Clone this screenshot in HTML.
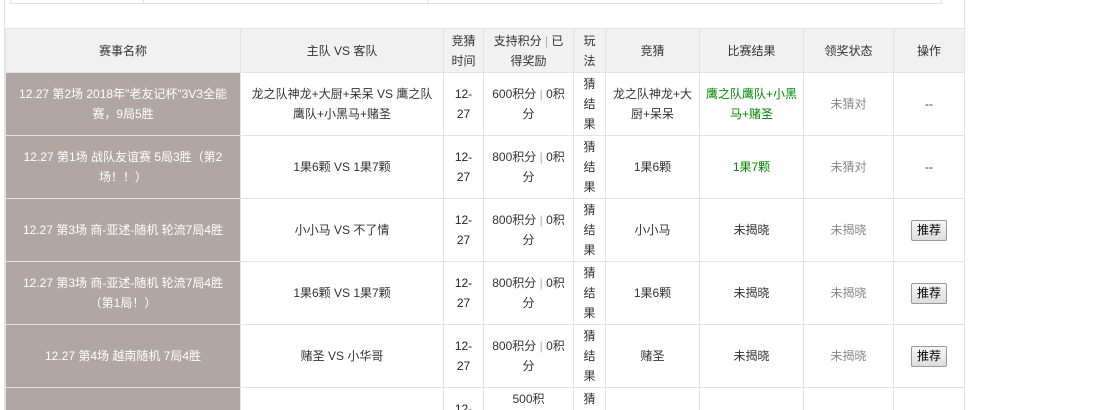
<!DOCTYPE html>
<html><head><meta charset="utf-8"><style>
html,body{margin:0;width:1108px;height:410px;overflow:hidden;background:#fff;font-family:"Liberation Sans","Noto Sans CJK SC",sans-serif;font-size:12px;color:#333;position:relative}
.outer{position:absolute;left:4px;top:-1px;width:959px;height:411px;border-left:1px solid #e3e3e3;border-right:1px solid #e3e3e3}
.top{position:absolute;left:10px;top:-2px;width:930px;height:5px;border:1px solid #e3e3e3;border-top:none}
.top i{position:absolute;top:0;height:5px;border-left:1px solid #e3e3e3}
table{position:absolute;left:5px;top:28px;border-collapse:collapse;table-layout:fixed;width:959px}
td,th{border:1px solid #e3e3e3;text-align:center;vertical-align:middle;line-height:20px;padding:0 8px;font-weight:normal;white-space:nowrap}
th{background:#f1f1f1;height:43px;color:#333}
tr.r td{height:62px}
td.n{background:#b0a7a5;color:#fff;padding:0 10px}
.g{color:#080}.gr{color:#888}.sep{color:#aaa}
.d{color:#223}
.s{padding:0 2px}
button{font-family:inherit;font-size:12px;padding:1px 5px;border:1px solid #999;background:linear-gradient(#f6f6f6,#ddd);border-radius:2px;line-height:17px}
</style></head><body>
<div class="outer"></div>
<div class="top"><i style="left:132px"></i><i style="left:417px"></i></div>
<table>
<colgroup><col style="width:235px"><col style="width:203px"><col style="width:40px"><col style="width:90px"><col style="width:32px"><col style="width:94px"><col style="width:104px"><col style="width:90px"><col style="width:71px"></colgroup>
<tr><th>赛事名称</th><th>主队 VS 客队</th><th class="s">竞猜<br>时间</th><th class="s">支持积分 <span class="sep">|</span> 已<br>得奖励</th><th class="s">玩<br>法</th><th>竞猜</th><th>比赛结果</th><th>领奖状态</th><th>操作</th></tr>
<tr class="r"><td class="n">12.27 第2场 2018年"老友记杯"3V3全能<br>赛，9局5胜</td><td class="s">龙之队神龙+大厨+呆呆 VS 鹰之队<br>鹰队+小黑马+赌圣</td><td class="d s">12-<br>27</td><td class="s">600积分 <span class="sep">|</span> 0积<br>分</td><td class="s">猜<br>结<br>果</td><td class="s">龙之队神龙+大<br>厨+呆呆</td><td class="g s">鹰之队鹰队+小黑<br>马+赌圣</td><td class="gr">未猜对</td><td>--</td></tr>
<tr class="r"><td class="n">12.27 第1场 战队友谊赛 5局3胜（第2<br>场！！）</td><td>1果6颗 VS 1果7颗</td><td class="d s">12-<br>27</td><td class="s">800积分 <span class="sep">|</span> 0积<br>分</td><td class="s">猜<br>结<br>果</td><td>1果6颗</td><td class="g">1果7颗</td><td class="gr">未猜对</td><td>--</td></tr>
<tr class="r"><td class="n">12.27 第3场 商-亚述-随机 轮流7局4胜</td><td>小小马 VS 不了情</td><td class="d s">12-<br>27</td><td class="s">800积分 <span class="sep">|</span> 0积<br>分</td><td class="s">猜<br>结<br>果</td><td>小小马</td><td>未揭晓</td><td class="gr">未揭晓</td><td><button>推荐</button></td></tr>
<tr class="r"><td class="n">12.27 第3场 商-亚述-随机 轮流7局4胜<br>（第1局！）</td><td>1果6颗 VS 1果7颗</td><td class="d s">12-<br>27</td><td class="s">800积分 <span class="sep">|</span> 0积<br>分</td><td class="s">猜<br>结<br>果</td><td>1果6颗</td><td>未揭晓</td><td class="gr">未揭晓</td><td><button>推荐</button></td></tr>
<tr class="r"><td class="n">12.27 第4场 越南随机 7局4胜</td><td>赌圣 VS 小华哥</td><td class="d s">12-<br>27</td><td class="s">800积分 <span class="sep">|</span> 0积<br>分</td><td class="s">猜<br>结<br>果</td><td>赌圣</td><td>未揭晓</td><td class="gr">未揭晓</td><td><button>推荐</button></td></tr>
<tr class="r"><td class="n"></td><td></td><td class="d s">12-<br>27</td><td class="s">500积<br>分 <span class="sep">|</span> 0积<br>分</td><td class="s">猜<br>结<br>果</td><td></td><td></td><td></td><td></td></tr>
</table>
</body></html>
